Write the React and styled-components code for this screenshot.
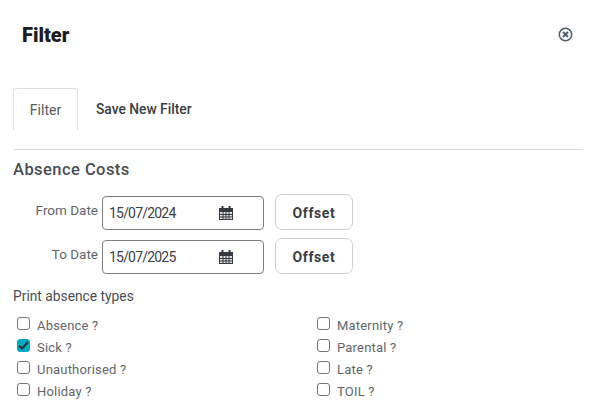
import React from "react";
import styled, { createGlobalStyle } from "styled-components";

const GlobalStyle = createGlobalStyle`
  html, body {
    margin: 0;
    padding: 0;
    background: #ffffff;
  }
  body {
    font-family: Roboto, "Liberation Sans", sans-serif;
    overflow: hidden;
  }
  * {
    box-sizing: border-box;
  }
`;

function CloseIcon() {
  return (
    <svg width="15" height="15" viewBox="0 0 15 15" fill="none" stroke="#4f5d73">
      <circle cx="7.5" cy="7.5" r="6.2" strokeWidth="1.5" />
      <path d="M5 5l5 5M10 5l-5 5" strokeWidth="2" />
    </svg>
  );
}

function CalendarIcon() {
  return (
    <svg width="14" height="14" viewBox="0 0 14 14">
      <path d="M2.5 0h2v2h5V0h2v2H14v3H0V2h2.5z" fill="#343a40" />
      <path d="M0 5h14v9H0z" fill="#343a40" />
      <path d="M1 6h2.5v2H1zM4.5 6h2v2h-2zM7.5 6h2v2h-2zM10.5 6H13v2h-2.5zM1 9h2.5v1.5H1zM4.5 9h2v1.5h-2zM7.5 9h2v1.5h-2zM10.5 9H13v1.5h-2.5zM1 11.5h2.5V13H1zM4.5 11.5h2V13h-2zM7.5 11.5h2V13h-2zM10.5 11.5H13V13h-2.5z" fill="#e4e4e4" />
    </svg>
  );
}

const leftTypes = [
  { label: "Absence ?", checked: false },
  { label: "Sick ?", checked: true },
  { label: "Unauthorised ?", checked: false },
  { label: "Holiday ?", checked: false },
];

const rightTypes = [
  { label: "Maternity ?", checked: false },
  { label: "Parental ?", checked: false },
  { label: "Late ?", checked: false },
  { label: "TOIL ?", checked: false },
];

function TypeColumn({ items }) {
  return (
    <TypeList>
      {items.map((item) => (
        <TypeRow key={item.label}>
          <CheckBox $checked={item.checked}>
            {item.checked && (
              <svg width="11" height="9" viewBox="0 0 11 9" fill="none">
                <path d="M1 4.5l3 3 6-6.5" stroke="#26323a" strokeWidth="2" />
              </svg>
            )}
          </CheckBox>
          <TypeLabel>{item.label}</TypeLabel>
        </TypeRow>
      ))}
    </TypeList>
  );
}

function DateRow({ label, value }) {
  return (
    <FieldRow>
      <FieldLabel>{label}</FieldLabel>
      <DateInput>
        <DateText>{value}</DateText>
        <CalendarIcon />
      </DateInput>
      <OffsetButton>Offset</OffsetButton>
    </FieldRow>
  );
}

export default function App() {
  return (
    <Page>
      <GlobalStyle />
      <Header>
        <Title>Filter</Title>
        <CloseButton>
          <CloseIcon />
        </CloseButton>
      </Header>
      <Tabs>
        <Tab $active>Filter</Tab>
        <Tab>Save New Filter</Tab>
      </Tabs>
      <SectionTitle>Absence Costs</SectionTitle>
      <Fields>
        <DateRow label="From Date" value="15/07/2024" />
        <DateRow label="To Date" value="15/07/2025" />
      </Fields>
      <PrintTitle>Print absence types</PrintTitle>
      <TypeGrid>
        <TypeColumn items={leftTypes} />
        <TypeColumn items={rightTypes} />
      </TypeGrid>
    </Page>
  );
}

const Page = styled.div`
  width: 593px;
  height: 411px;
  padding: 0 10px 0 13px;
  overflow: hidden;
`;

const Header = styled.div`
  display: flex;
  align-items: center;
  justify-content: space-between;
  height: 69px;
  padding: 0 10px 0 9px;
`;

const Title = styled.h1`
  margin: 0;
  padding-top: 1px;
  font-size: 20px;
  font-weight: 900;
  color: #1d1d1f;
`;

const CloseButton = styled.div`
  display: flex;
`;

const Tabs = styled.div`
  display: flex;
  height: 81px;
  padding-top: 19px;
  border-bottom: 1px solid #dedede;
  align-items: flex-start;
`;

const Tab = styled.div`
  width: ${(p) => (p.$active ? "65px" : "auto")};
  height: 42px;
  padding: 0 ${(p) => (p.$active ? "0" : "18px")};
  display: flex;
  align-items: center;
  justify-content: center;
  font-size: ${(p) => (p.$active ? "14px" : "13.8px")};
  font-weight: ${(p) => (p.$active ? 400 : 500)};
  color: ${(p) => (p.$active ? "#555a60" : "#3a3d42")};
  border: ${(p) => (p.$active ? "1px solid #dedede" : "none")};
  border-bottom: none;
  border-radius: 4px 4px 0 0;
`;

const SectionTitle = styled.h2`
  margin: 10px 0 0;
  font-size: 16.5px;
  line-height: 20px;
  font-weight: 500;
  letter-spacing: 0.45px;
  color: #4a4e54;
`;

const Fields = styled.div`
  display: flex;
  flex-direction: column;
  gap: 8px;
  margin-top: 14px;
`;

const FieldRow = styled.div`
  display: flex;
  align-items: flex-end;
`;

const FieldLabel = styled.div`
  width: 85px;
  margin-right: 4px;
  padding-bottom: 12px;
  text-align: right;
  font-size: 13.5px;
  color: #62666b;
`;

const DateInput = styled.div`
  display: flex;
  align-items: center;
  justify-content: space-between;
  width: 162px;
  height: 34px;
  padding: 0 30px 0 6px;
  border: 1px solid #808080;
  border-radius: 4px;
`;

const DateText = styled.span`
  font-size: 14px;
  letter-spacing: -0.8px;
  color: #3c3f44;
`;

const OffsetButton = styled.div`
  display: flex;
  align-items: center;
  justify-content: center;
  width: 78px;
  height: 36px;
  margin-left: 11px;
  padding-top: 1px;
  border: 1px solid #cfcfcf;
  border-radius: 7px;
  font-size: 14px;
  font-weight: 700;
  letter-spacing: 0.6px;
  color: #3a3d42;
`;

const PrintTitle = styled.div`
  margin-top: 14px;
  font-size: 13.8px;
  line-height: 17px;
  font-weight: 400;
  color: #4a4e54;
`;

const TypeGrid = styled.div`
  display: grid;
  grid-template-columns: 300px 1fr;
  margin-top: 12px;
  padding-left: 4px;
`;

const TypeList = styled.div`
  display: flex;
  flex-direction: column;
  gap: 9px;
`;

const TypeRow = styled.div`
  display: flex;
  align-items: center;
  gap: 7px;
  height: 13px;
`;

const CheckBox = styled.div`
  display: flex;
  align-items: center;
  justify-content: center;
  width: 13px;
  height: 13px;
  border: 1px solid ${(p) => (p.$checked ? "#00acc1" : "#767676")};
  border-radius: 3px;
  background: ${(p) => (p.$checked ? "#00acc1" : "#ffffff")};
`;

const TypeLabel = styled.span`
  margin-top: 3px;
  font-size: 13px;
  letter-spacing: 0.2px;
  color: #62666b;
`;
